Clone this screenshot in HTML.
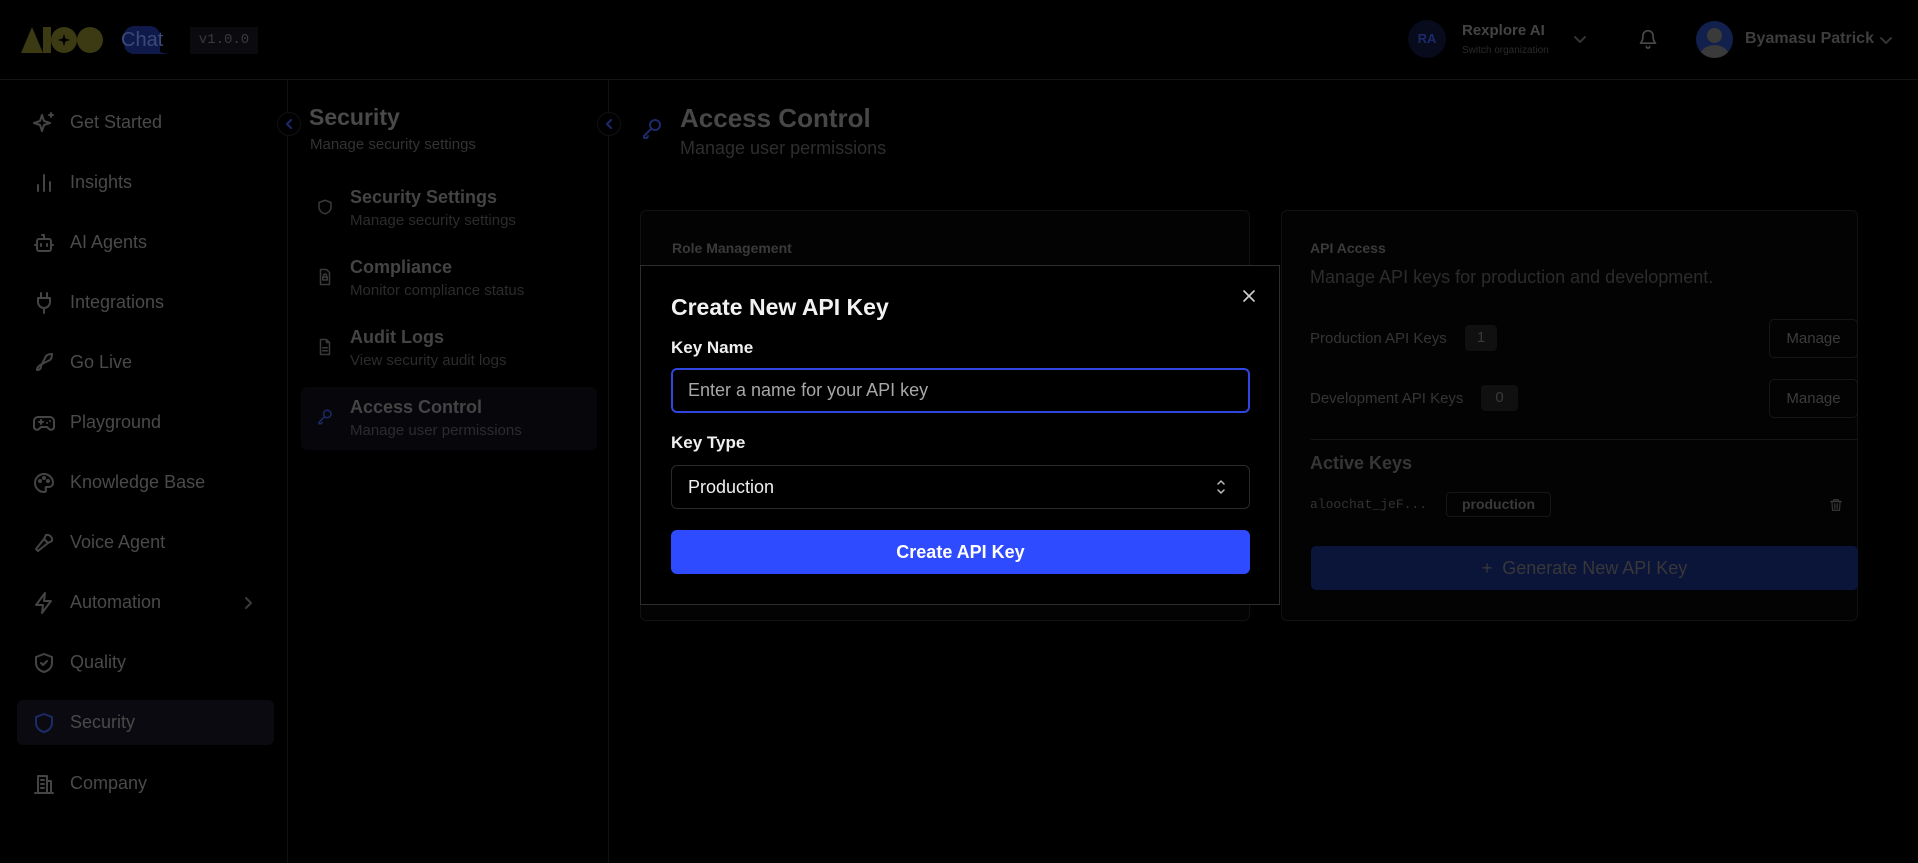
<!DOCTYPE html>
<html><head><meta charset="utf-8"><style>
*{box-sizing:border-box;margin:0;padding:0}
body{width:1918px;height:863px;background:#000;font-family:"Liberation Sans",sans-serif;position:relative;overflow:hidden;color:#555}
.a{position:absolute;white-space:nowrap}
svg{position:absolute;fill:none;stroke:currentColor;stroke-width:2;stroke-linecap:round;stroke-linejoin:round}
.nav{font-size:18px;color:#4a4a4a}
.sub{color:#2c2c2c}
</style></head><body>
<!-- header -->
<svg style="left:20px;top:25px;stroke:none" width="150" height="30" viewBox="0 0 150 30">
<path d="M1 28L12 2 23 28z" fill="#3b3a12"/>
<rect x="23" y="2" width="8" height="26" fill="#3b3a12"/>
<circle cx="44" cy="15" r="13" fill="#3b3a12"/>
<path d="M44 9l1.5 4.5 4.5 1.5-4.5 1.5-1.5 4.5-1.5-4.5-4.5-1.5 4.5-1.5z" fill="#000"/>
<circle cx="70" cy="15" r="13" fill="#3b3a12"/>
<path d="M104 1h26a10 10 0 0110 10v16l8 2h-34a10 10 0 01-10-10v-8a10 10 0 0110-10z" fill="#0f1a4a"/>
</svg>
<div class="a" style="left:121px;top:28px;font-size:20px;color:#3b4a7a;line-height:24px">Chat</div>
<div class="a" style="left:190px;top:27px;width:68px;height:27px;background:#0b0b0f;color:#3a3a3a;font-family:'Liberation Mono',monospace;font-size:14px;line-height:27px;text-align:center">v1.0.0</div>
<div class="a" style="left:0;top:79px;width:1918px;height:1px;background:#141414"></div>
<div class="a" style="left:1408px;top:20px;width:38px;height:38px;background:#070b1c;color:#1c2a6a;font-size:13px;font-weight:bold;line-height:38px;text-align:center;border-radius:50%">RA</div>
<div class="a" style="left:1462px;top:22px;font-size:15px;color:#444;font-weight:bold">Rexplore AI</div>
<div class="a" style="left:1462px;top:45px;font-size:10px;color:#2a2a2a">Switch organization</div>
<svg style="left:1573px;top:35px;color:#333" width="14" height="10" viewBox="0 0 14 10"><path d="M2 2l5 5 5-5"/></svg>
<svg style="left:1638px;top:28px;color:#4a4a4a" width="20" height="22" viewBox="0 0 24 24"><path d="M6 8a6 6 0 0112 0c0 7 3 9 3 9H3s3-2 3-9M10 21a2 2 0 004 0"/></svg>
<div class="a" style="left:1696px;top:21px;width:37px;height:37px;border-radius:50%;background:#12204e;overflow:hidden"><div style="position:absolute;left:11px;top:7px;width:15px;height:15px;border-radius:50%;background:#3a3a3a"></div><div style="position:absolute;left:4px;top:24px;width:29px;height:22px;border-radius:50%;background:#3a3a3a"></div></div>
<div class="a" style="left:1745px;top:30px;font-size:16px;color:#3e3e3e;font-weight:bold">Byamasu Patrick</div>
<svg style="left:1879px;top:36px;color:#333" width="14" height="10" viewBox="0 0 14 10"><path d="M2 2l5 5 5-5"/></svg>
<!-- sidebar -->
<div class="a" style="left:287px;top:80px;width:1px;height:783px;background:#111"></div>
<div class="a" style="left:608px;top:80px;width:1px;height:783px;background:#111"></div>
<div class="a" style="left:17px;top:700px;width:257px;height:45px;background:#0a0a10;border-radius:6px"></div>
<div class="a nav" style="left:70px;top:112px">Get Started</div>
<div class="a nav" style="left:70px;top:172px">Insights</div>
<div class="a nav" style="left:70px;top:232px">AI Agents</div>
<div class="a nav" style="left:70px;top:292px">Integrations</div>
<div class="a nav" style="left:70px;top:352px">Go Live</div>
<div class="a nav" style="left:70px;top:412px">Playground</div>
<div class="a nav" style="left:70px;top:472px">Knowledge Base</div>
<div class="a nav" style="left:70px;top:532px">Voice Agent</div>
<div class="a nav" style="left:70px;top:592px">Automation</div>
<svg style="left:243px;top:596px;color:#3a3a3a" width="10" height="14" viewBox="0 0 10 14"><path d="M3 2l5 5-5 5"/></svg>
<div class="a nav" style="left:70px;top:652px">Quality</div>
<div class="a nav" style="left:70px;top:712px">Security</div>
<div class="a nav" style="left:70px;top:773px">Company</div>
<svg style="left:32px;top:111px;color:#444" width="24" height="24" viewBox="0 0 24 24"><path d="M10 4l2 6 6 2-6 2-2 6-2-6-6-2 6-2zM19 2v4M17 4h4"/></svg>
<svg style="left:32px;top:171px;color:#444" width="24" height="24" viewBox="0 0 24 24"><path d="M6 20v-6M12 20V4M18 20v-9"/></svg>
<svg style="left:32px;top:231px;color:#444" width="24" height="24" viewBox="0 0 24 24"><rect x="5" y="8" width="14" height="12" rx="2"/><path d="M12 8V4h-2M9 13v2M15 13v2M3 14h2M19 14h2"/></svg>
<svg style="left:32px;top:291px;color:#444" width="24" height="24" viewBox="0 0 24 24"><path d="M9 2v5M15 2v5M6 7h12v4a6 6 0 01-12 0zM12 17v5"/></svg>
<svg style="left:32px;top:351px;color:#444" width="24" height="24" viewBox="0 0 24 24"><path d="M5 19c0-3 2-4 3-4l1 1c0 1-1 3-4 3zM9 15l5-10c2-2 5-2 6-2 0 1 0 4-2 6l-10 5z"/></svg>
<svg style="left:32px;top:411px;color:#444" width="24" height="24" viewBox="0 0 24 24"><path d="M6 6h12a4 4 0 014 4v6a3 3 0 01-5 2l-2-2H9l-2 2a3 3 0 01-5-2v-6a4 4 0 014-4zM7 11h4M9 9v4M15 12h.01M18 10h.01"/></svg>
<svg style="left:32px;top:471px;color:#444" width="24" height="24" viewBox="0 0 24 24"><path d="M12 3a9 9 0 000 18c1.5 0 2-1 2-2s-1-2 0-3h3a4 4 0 004-4c0-5-4-9-9-9z"/><circle cx="8" cy="10" r="1"/><circle cx="12" cy="7" r="1"/><circle cx="16" cy="10" r="1"/></svg>
<svg style="left:32px;top:531px;color:#444" width="24" height="24" viewBox="0 0 24 24"><path d="M14 4a5 5 0 016 6l-4 2-4-4zM12 8L4 18l2 2 10-8"/></svg>
<svg style="left:32px;top:591px;color:#444" width="24" height="24" viewBox="0 0 24 24"><path d="M13 2L4 14h7l-1 8 9-12h-7z"/></svg>
<svg style="left:32px;top:651px;color:#444" width="24" height="24" viewBox="0 0 24 24"><path d="M12 3l8 3v6c0 5-4 8-8 9-4-1-8-4-8-9V6zM9 12l2 2 4-4"/></svg>
<svg style="left:32px;top:711px;color:#1c2a6a" width="24" height="24" viewBox="0 0 24 24"><path d="M12 3l8 3v6c0 5-4 8-8 9-4-1-8-4-8-9V6z"/></svg>
<svg style="left:32px;top:772px;color:#444" width="24" height="24" viewBox="0 0 24 24"><path d="M6 21V4h9v17M15 9h4v12M3 21h18M9 8h3M9 12h3M9 16h3"/></svg>
<!-- second panel -->
<div class="a" style="left:277px;top:112px;width:24px;height:24px;border-radius:50%;border:1px solid #111;background:#000"></div>
<svg style="left:283px;top:118px;color:#1c2a6a" width="12" height="12" viewBox="0 0 12 12"><path d="M8 2L4 6l4 4"/></svg>
<div class="a" style="left:597px;top:112px;width:24px;height:24px;border-radius:50%;border:1px solid #111;background:#000"></div>
<svg style="left:603px;top:118px;color:#1c2a6a" width="12" height="12" viewBox="0 0 12 12"><path d="M8 2L4 6l4 4"/></svg>
<div class="a" style="left:309px;top:104px;font-size:23px;font-weight:bold;color:#4a4a4a">Security</div>
<div class="a sub" style="left:310px;top:136px;font-size:15px;color:#333">Manage security settings</div>
<div class="a" style="left:301px;top:387px;width:296px;height:63px;background:#07070b;border-radius:6px"></div>
<div class="a" style="left:350px;top:187px;font-size:18px;font-weight:bold;color:#444">Security Settings</div>
<div class="a sub" style="left:350px;top:212px;font-size:15px">Manage security settings</div>
<div class="a" style="left:350px;top:257px;font-size:18px;font-weight:bold;color:#444">Compliance</div>
<div class="a sub" style="left:350px;top:282px;font-size:15px">Monitor compliance status</div>
<div class="a" style="left:350px;top:327px;font-size:18px;font-weight:bold;color:#444">Audit Logs</div>
<div class="a sub" style="left:350px;top:352px;font-size:15px">View security audit logs</div>
<div class="a" style="left:350px;top:397px;font-size:18px;font-weight:bold;color:#444">Access Control</div>
<div class="a sub" style="left:350px;top:422px;font-size:15px">Manage user permissions</div>
<svg style="left:316px;top:198px;color:#3a3a3a" width="18" height="18" viewBox="0 0 24 24"><path d="M12 3l8 3v6c0 5-4 8-8 9-4-1-8-4-8-9V6z"/></svg>
<svg style="left:316px;top:268px;color:#3a3a3a" width="18" height="18" viewBox="0 0 24 24"><path d="M14 2H6v20h12V6zM9 16h6v-4H9zM10 12v-2a2 2 0 014 0v2"/></svg>
<svg style="left:316px;top:338px;color:#3a3a3a" width="18" height="18" viewBox="0 0 24 24"><path d="M14 2H6v20h12V6zM14 2v4h4M9 13h6M9 17h6"/></svg>
<svg style="left:316px;top:408px;color:#1c2a6a" width="18" height="18" viewBox="0 0 24 24"><circle cx="15" cy="8" r="5"/><path d="M11 12l-7 7v2h3l1-2"/></svg>
<!-- main -->
<svg style="left:640px;top:117px;color:#1c2a6a" width="24" height="24" viewBox="0 0 24 24"><circle cx="15" cy="8" r="5"/><path d="M11 12l-7 7v2h3l1-2"/></svg>
<div class="a" style="left:680px;top:103px;font-size:26px;font-weight:bold;color:#474747">Access Control</div>
<div class="a" style="left:680px;top:138px;font-size:18px;color:#2e2e2e">Manage user permissions</div>
<div class="a" style="left:640px;top:210px;width:610px;height:411px;border:1px solid #121212;border-radius:6px;background:#030303"></div>
<div class="a" style="left:1281px;top:210px;width:577px;height:411px;border:1px solid #121212;border-radius:6px;background:#030303"></div>
<div class="a" style="left:672px;top:240px;font-size:14px;font-weight:bold;color:#3a3a3a">Role Management</div>
<div class="a" style="left:1310px;top:240px;font-size:14px;font-weight:bold;color:#3a3a3a">API Access</div>
<div class="a" style="left:1310px;top:267px;font-size:18px;color:#2c2c2c">Manage API keys for production and development.</div>
<div class="a" style="left:1310px;top:330px;font-size:15px;color:#353535">Production API Keys</div>
<div class="a" style="left:1465px;top:325px;width:32px;height:26px;background:#101010;border-radius:4px;color:#3a3a3a;font-size:15px;line-height:26px;text-align:center">1</div>
<div class="a" style="left:1769px;top:319px;width:89px;height:39px;border:1px solid #161616;border-radius:5px;color:#3c3c3c;font-size:15px;line-height:37px;text-align:center">Manage</div>
<div class="a" style="left:1310px;top:390px;font-size:15px;color:#353535">Development API Keys</div>
<div class="a" style="left:1481px;top:385px;width:37px;height:26px;background:#101010;border-radius:4px;color:#3a3a3a;font-size:15px;line-height:26px;text-align:center">0</div>
<div class="a" style="left:1769px;top:379px;width:89px;height:39px;border:1px solid #161616;border-radius:5px;color:#3c3c3c;font-size:15px;line-height:37px;text-align:center">Manage</div>
<div class="a" style="left:1311px;top:439px;width:547px;height:1px;background:#161616"></div>
<div class="a" style="left:1310px;top:453px;font-size:18px;font-weight:bold;color:#363636">Active Keys</div>
<div class="a" style="left:1310px;top:497px;font-size:13px;font-family:'Liberation Mono',monospace;color:#333">aloochat_jeF...</div>
<div class="a" style="left:1446px;top:492px;width:105px;height:25px;border:1px solid #161616;border-radius:4px;color:#3a3a3a;font-size:14px;font-weight:bold;line-height:23px;text-align:center">production</div>
<svg style="left:1829px;top:497px;color:#3a3a3a" width="14" height="16" viewBox="0 0 24 24"><path d="M3 6h18M8 6V3h8v3M5 6l1 15h12l1-15M10 10v8M14 10v8"/></svg>
<div class="a" style="left:1311px;top:546px;width:547px;height:44px;background:#0b1439;border-radius:5px;color:#383838;font-size:18px;line-height:44px;text-align:center">+&nbsp; Generate New API Key</div>
<!-- modal -->
<div class="a" style="left:640px;top:265px;width:640px;height:340px;background:#000;border:1px solid #2e2e2e"></div>
<div class="a" style="left:671px;top:294px;font-size:23px;font-weight:bold;color:#f2f2f2">Create New API Key</div>
<svg style="left:1242px;top:289px;color:#cfcfcf;stroke-width:1.6" width="14" height="14" viewBox="0 0 14 14"><path d="M2 2l10 10M12 2L2 12"/></svg>
<div class="a" style="left:671px;top:338px;font-size:17px;font-weight:bold;color:#f0f0f0">Key Name</div>
<div class="a" style="left:671px;top:368px;width:579px;height:45px;border:2px solid #2f46e0;border-radius:6px;color:#a8a8a8;font-size:18px;line-height:41px;padding-left:15px">Enter a name for your API key</div>
<div class="a" style="left:671px;top:433px;font-size:17px;font-weight:bold;color:#f0f0f0">Key Type</div>
<div class="a" style="left:671px;top:465px;width:579px;height:44px;border:1px solid #2a2a2a;border-radius:6px;color:#f0f0f0;font-size:18px;line-height:42px;padding-left:16px">Production</div>
<svg style="left:1216px;top:478px;color:#bbb;stroke-width:1.5" width="10" height="18" viewBox="0 0 10 18"><path d="M2 6l3-3 3 3M2 12l3 3 3-3"/></svg>
<div class="a" style="left:671px;top:530px;width:579px;height:44px;background:#2f4bff;border-radius:6px;color:#fff;font-size:18px;font-weight:bold;line-height:44px;text-align:center">Create API Key</div>
</body></html>
